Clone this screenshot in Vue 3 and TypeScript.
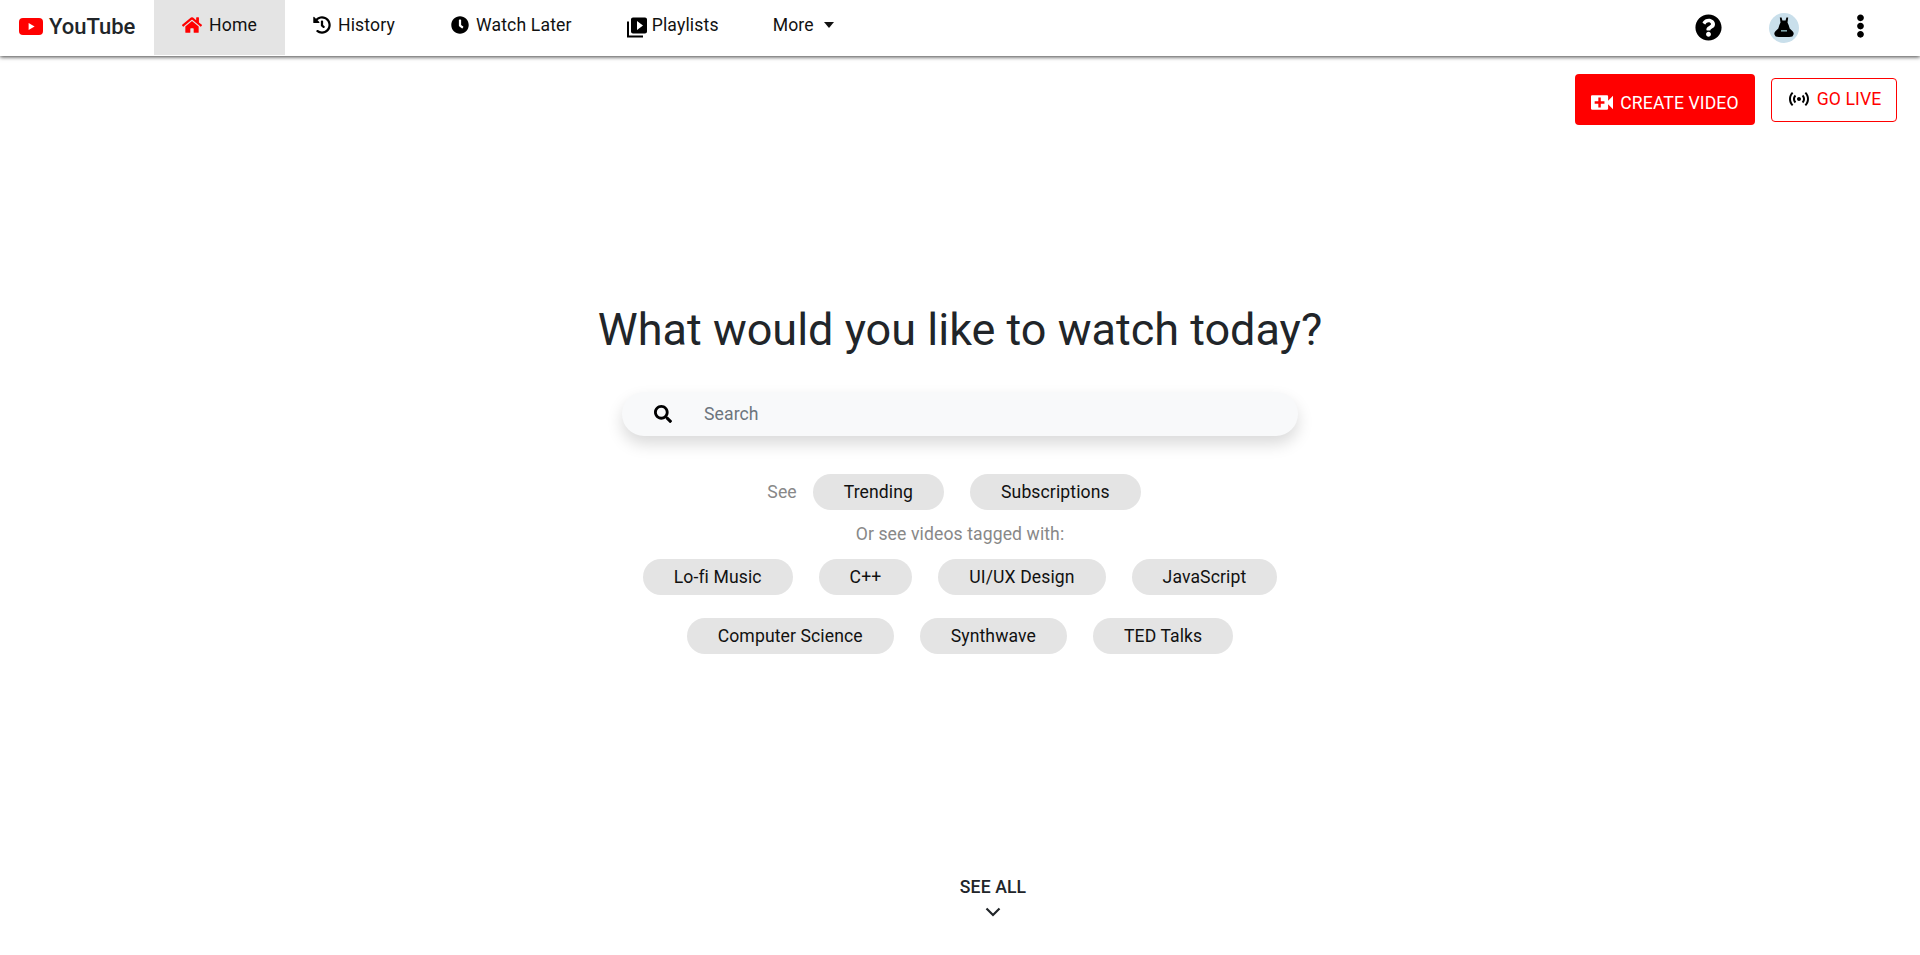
<template>
  <div class="page">
    <nav class="navbar">
      <a class="brand">
        <svg class="yt-logo" viewBox="0 0 24 17" width="24" height="17">
          <rect width="24" height="17" rx="4" fill="#f00" />
          <path d="M9.600 5v7l6-3.500z" fill="#fff" />
        </svg>
        <span>YouTube</span>
      </a>
      <ul class="nav-links">
        <li v-for="item in navItems" :key="item.label" class="nav-item" :class="[item.cls, { active: item.active }]">
          <svg class="nav-icon" :viewBox="item.box" :width="item.size" :height="item.height ?? 18">
            <path :d="item.path" />
          </svg>
          <span>{{ item.label }}</span>
        </li>
        <li class="nav-item more">
          <span>More</span>
          <span class="caret"></span>
        </li>
      </ul>
      <div class="nav-right">
        <span class="nav-cell">
          <svg viewBox="0 0 512 512" width="27" height="27">
            <path d="M504 256c0 136.997-111.043 248-248 248S8 392.997 8 256C8 119.083 119.043 8 256 8s248 111.083 248 248zM262.655 90c-54.497 0-89.255 22.957-116.549 63.758-3.536 5.286-2.353 12.415 2.715 16.258l34.699 26.31c5.205 3.947 12.621 3.008 16.665-2.122 17.864-22.658 30.113-35.797 57.303-35.797 20.429 0 45.698 13.148 45.698 32.958 0 14.976-12.363 22.667-32.534 33.976C247.128 238.528 216 254.941 216 296v4c0 6.627 5.373 12 12 12h56c6.627 0 12-5.373 12-12v-1.333c0-28.462 83.186-29.647 83.186-106.667 0-58.002-60.165-102-116.531-102zM256 338c-25.365 0-46 20.635-46 46 0 25.364 20.635 46 46 46s46-20.636 46-46c0-25.365-20.635-46-46-46z" />
          </svg>
        </span>
        <span class="nav-cell">
          <svg viewBox="0 0 30 30" width="30" height="30">
            <circle cx="15" cy="15" r="15" fill="#c9dfeb" />
            <path d="M10.800 4.500h1.800l.8 3h3.200l.8-3h1.800l-.7 5 1.200 2.800 1 3.300 2.900 2.600c1.300 1.200 1.300 2.700.7 3.700l-1 1.600-3 .5h-10.600l-3-.5-1-1.600c-.6-1-.6-2.500.7-3.700l2.900-2.600 1-3.300 1.200-2.800z" />
            <rect x="12" y="17" width="6" height="1.600" fill="#7fa3a8" />
          </svg>
        </span>
        <span class="nav-cell">
          <svg class="dots" viewBox="0 0 192 512" width="9" height="24">
            <path d="M96 184c39.800 0 72 32.200 72 72s-32.200 72-72 72-72-32.200-72-72 32.200-72 72-72zM24 80c0 39.800 32.200 72 72 72s72-32.200 72-72S135.800 8 96 8 24 40.200 24 80zm0 352c0 39.800 32.200 72 72 72s72-32.200 72-72-32.200-72-72-72-72 32.200-72 72z" />
          </svg>
        </span>
      </div>
    </nav>

    <div class="actions">
      <button class="btn-create">
        <svg viewBox="3 6 18 12" width="22" height="15">
          <path d="M17 10.500V7c0-.55-.45-1-1-1H4c-.55 0-1 .45-1 1v10c0 .55.45 1 1 1h12c.55 0 1-.45 1-1v-3.500l4 4v-11l-4 4zM14 13h-3v3H9v-3H6v-2h3V8h2v3h3v2z" />
        </svg>
        CREATE VIDEO
      </button>
      <button class="btn-live">
        <svg viewBox="0 0 24 24" width="24" height="24">
          <path d="M7.760 16.240C6.670 15.160 6 13.660 6 12s.67-3.160 1.760-4.240l1.420 1.420C8.450 9.900 8 10.900 8 12c0 1.100.45 2.100 1.170 2.830l-1.410 1.410zm8.480 0C17.330 15.160 18 13.660 18 12s-.67-3.160-1.760-4.240l-1.420 1.420C15.550 9.900 16 10.900 16 12c0 1.100-.45 2.100-1.170 2.830l1.410 1.410zM12 10c-1.100 0-2 .9-2 2s.9 2 2 2 2-.9 2-2-.9-2-2-2zm8 2c0 2.210-.9 4.210-2.350 5.650l1.420 1.420C20.880 17.260 22 14.760 22 12s-1.120-5.260-2.930-7.070l-1.420 1.420C19.100 7.790 20 9.790 20 12zM6.350 6.350L4.930 4.930C3.120 6.740 2 9.240 2 12s1.120 5.260 2.930 7.070l1.420-1.420C4.900 16.210 4 14.210 4 12s.9-4.210 2.350-5.650z" />
        </svg>
        GO LIVE
      </button>
    </div>

    <main class="hero">
      <h1>What would you like to watch today?</h1>
      <div class="search">
        <svg viewBox="0 0 512 512" width="18" height="18">
          <path d="M505 442.700L405.300 343c-4.500-4.500-10.600-7-17-7H372c27.600-35.300 44-79.700 44-128C416 93.100 322.900 0 208 0S0 93.100 0 208s93.100 208 208 208c48.300 0 92.700-16.400 128-44v16.300c0 6.400 2.500 12.500 7 17l99.700 99.700c9.400 9.400 24.600 9.400 33.900 0l28.300-28.300c9.400-9.400 9.400-24.600.1-34zM208 336c-70.700 0-128-57.200-128-128 0-70.700 57.200-128 128-128 70.700 0 128 57.200 128 128 0 70.700-57.200 128-128 128z" />
        </svg>
        <input type="text" placeholder="Search" />
      </div>
      <div class="see-row">
        <span class="muted">See</span>
        <button v-for="link in seeLinks" :key="link" class="pill">{{ link }}</button>
      </div>
      <p class="muted tagged">Or see videos tagged with:</p>
      <div class="tags">
        <button v-for="tag in tags" :key="tag" class="pill">{{ tag }}</button>
      </div>
    </main>

    <div class="see-all">
      <span>SEE ALL</span>
      <svg viewBox="0 0 16 10" width="16" height="10">
        <path d="M1.500 1.500L8 8l6.500-6.500" fill="none" stroke="#212529" stroke-width="2.200" />
      </svg>
    </div>
  </div>
</template>

<script setup lang="ts">
interface NavItem {
  label: string;
  box: string;
  size: number;
  height?: number;
  cls?: string;
  path: string;
  active?: boolean;
}

const navItems: NavItem[] = [
  {
    label: 'Home',
    box: '0 0 576 512',
    size: 20,
    active: true,
    path: 'M280.37 148.26L96 300.11V464a16 16 0 0 0 16 16l112.06-.29a16 16 0 0 0 15.92-16V368a16 16 0 0 1 16-16h64a16 16 0 0 1 16 16v95.64a16 16 0 0 0 16 16.05L464 480a16 16 0 0 0 16-16V300L295.67 148.26a12.19 12.19 0 0 0-15.3 0zM571.6 251.47L488 182.56V44.05a12 12 0 0 0-12-12h-56a12 12 0 0 0-12 12v72.61L318.47 43a48 48 0 0 0-61 0L4.34 251.47a12 12 0 0 0-1.6 16.9l25.5 31A12 12 0 0 0 45.15 301l235.22-193.74a12.19 12.19 0 0 1 15.3 0L530.9 301a12 12 0 0 0 16.9-1.6l25.5-31a12 12 0 0 0-1.7-16.93z',
  },
  {
    label: 'History',
    box: '0 0 512 512',
    size: 18,
    path: 'M504 255.531c.253 136.64-111.18 248.372-247.82 248.468-59.015.042-113.223-20.53-155.822-54.911-11.077-8.94-11.905-25.541-1.839-35.607l11.267-11.267c8.609-8.609 22.353-9.551 31.891-1.984C173.062 425.135 212.781 440 256 440c101.705 0 184-82.311 184-184 0-101.705-82.311-184-184-184-48.814 0-93.149 18.969-126.068 49.932l50.754 50.754c10.08 10.08 2.941 27.314-11.313 27.314H24c-8.837 0-16-7.163-16-16V38.627c0-14.254 17.234-21.393 27.314-11.314l49.372 49.372C129.209 34.136 189.552 8 256 8c136.81 0 247.747 110.78 248 247.531zm-180.912 78.784l9.823-12.63c8.138-10.463 6.253-25.542-4.21-33.679L288 256.349V152c0-13.255-10.745-24-24-24h-16c-13.255 0-24 10.745-24 24v135.651l65.409 50.874c10.463 8.137 25.541 6.253 33.679-4.21z',
  },
  {
    label: 'Watch Later',
    box: '0 0 512 512',
    size: 18,
    path: 'M256,8C119,8,8,119,8,256S119,504,256,504,504,393,504,256,393,8,256,8Zm92.49,313h0l-20,25a16,16,0,0,1-22.49,2.5h0l-67-49.72a40,40,0,0,1-15-31.23V112a16,16,0,0,1,16-16h32a16,16,0,0,1,16,16V256l58,42.5A16,16,0,0,1,348.49,321Z',
  },
  {
    label: 'Playlists',
    box: '2 2 20 20',
    size: 20,
    height: 21,
    cls: 'playlists',
    path: 'M4 6H2v16h16v-2H4V6zm16-4H8c-1.100 0-2 .9-2 2v12c0 1.100.9 2 2 2h12c1.100 0 2-.9 2-2V4c0-1.100-.9-2-2-2zm-8 12.500v-9l6 4.500-6 4.500z',
  },
];

const seeLinks = ['Trending', 'Subscriptions'];
const tags = ['Lo-fi Music', 'C++', 'UI/UX Design', 'JavaScript', 'Computer Science', 'Synthwave', 'TED Talks'];
</script>

<style>
html,
body {
  margin: 0;
  background: #fff;
}
</style>

<style scoped>
.page {
  height: 955px;
  display: flex;
  flex-direction: column;
  overflow: hidden;
  font-family: Roboto, "Liberation Sans", sans-serif;
  font-size: 17.6px;
  letter-spacing: 0.1px;
  color: #212529;
}

.navbar {
  height: 56px;
  flex-shrink: 0;
  display: flex;
  align-items: flex-start;
  background: #fff;
  box-shadow: 0 1px 4px rgba(0, 0, 0, 0.75);
}

.brand {
  width: 154px;
  height: 55px;
  box-sizing: border-box;
  padding: 0 0 3px 19px;
  display: flex;
  align-items: center;
  gap: 6px;
  font-size: 22px;
  font-weight: 500;
  letter-spacing: 0;
}

.nav-links {
  list-style: none;
  margin: 0;
  padding: 0;
  height: 55px;
  display: flex;
}

.nav-item {
  padding: 0 28px 5px;
  display: flex;
  align-items: center;
  gap: 7px;
  letter-spacing: 0.15px;
  color: #111;
}

.nav-item.active {
  background: #e4e4e4;
}

.nav-item.playlists {
  margin-left: -1px;
  gap: 5px;
}

.nav-item.playlists .nav-icon {
  margin-top: 5px;
}

.nav-item.more {
  margin-left: -2px;
}

.nav-icon {
  fill: #000;
}

.nav-item.active .nav-icon {
  fill: #f00;
}

.caret {
  width: 0;
  height: 0;
  margin-left: 3px;
  border-top: 6px solid #111;
  border-left: 5px solid transparent;
  border-right: 5px solid transparent;
}

.nav-right {
  margin-left: auto;
  height: 55px;
  padding-right: 22px;
  display: flex;
  align-items: center;
}

.nav-cell {
  width: 76px;
  display: flex;
  justify-content: center;
}

.dots {
  margin-top: -3px;
}

.actions {
  padding: 18px 23px 0 0;
  display: flex;
  justify-content: flex-end;
  align-items: center;
  gap: 16px;
}

.actions button {
  display: flex;
  align-items: center;
  justify-content: center;
  font-family: inherit;
  font-size: 17.6px;
  letter-spacing: inherit;
  border-radius: 4px;
}

.btn-create {
  width: 180px;
  height: 51px;
  gap: 7px;
  padding-top: 7px;
  background: #f00;
  color: #fff;
  border: none;
}

.btn-create svg {
  fill: #fff;
}

.btn-live {
  width: 126px;
  height: 44px;
  gap: 6px;
  padding-bottom: 2px;
  background: #fff;
  color: #f00;
  border: 1px solid #f00;
}

.hero {
  display: flex;
  flex-direction: column;
  align-items: center;
}

h1 {
  margin: 0;
  margin-top: 178px;
  font-size: 45px;
  font-weight: 400;
  line-height: 54px;
  letter-spacing: 0;
  color: #212529;
}

.search {
  width: 676px;
  height: 44px;
  margin-top: 35px;
  box-sizing: border-box;
  padding-left: 32px;
  display: flex;
  align-items: center;
  gap: 32px;
  background: #f8f9fa;
  border-radius: 22px;
  box-shadow: 0 8px 16px rgba(0, 0, 0, 0.15);
}

.search input {
  flex: 1;
  padding: 0;
  border: none;
  outline: none;
  background: transparent;
  font-family: inherit;
  font-size: 17.6px;
  letter-spacing: inherit;
  color: #495057;
}

.search input::placeholder {
  color: #6c757d;
}

.see-row {
  margin-top: 38px;
  padding-right: 12px;
  display: flex;
  align-items: center;
  gap: 16px;
}

.see-row .pill + .pill {
  margin-left: 10px;
}

.muted {
  color: #888;
}

.tagged {
  margin: 15px 0 0;
  line-height: 19px;
}

.tags {
  width: 676px;
  margin-top: 15px;
  display: flex;
  flex-wrap: wrap;
  justify-content: center;
  gap: 23px 26px;
}

.pill {
  height: 36px;
  padding: 0 31px;
  border: none;
  border-radius: 18px;
  background: #e4e4e4;
  color: #111;
  font-family: inherit;
  font-size: 17.6px;
  letter-spacing: inherit;
}

.see-all {
  margin-top: auto;
  padding: 0 0 38px 66px;
  display: flex;
  flex-direction: column;
  align-items: center;
  gap: 10px;
  font-weight: 500;
  line-height: 20px;
}
</style>
